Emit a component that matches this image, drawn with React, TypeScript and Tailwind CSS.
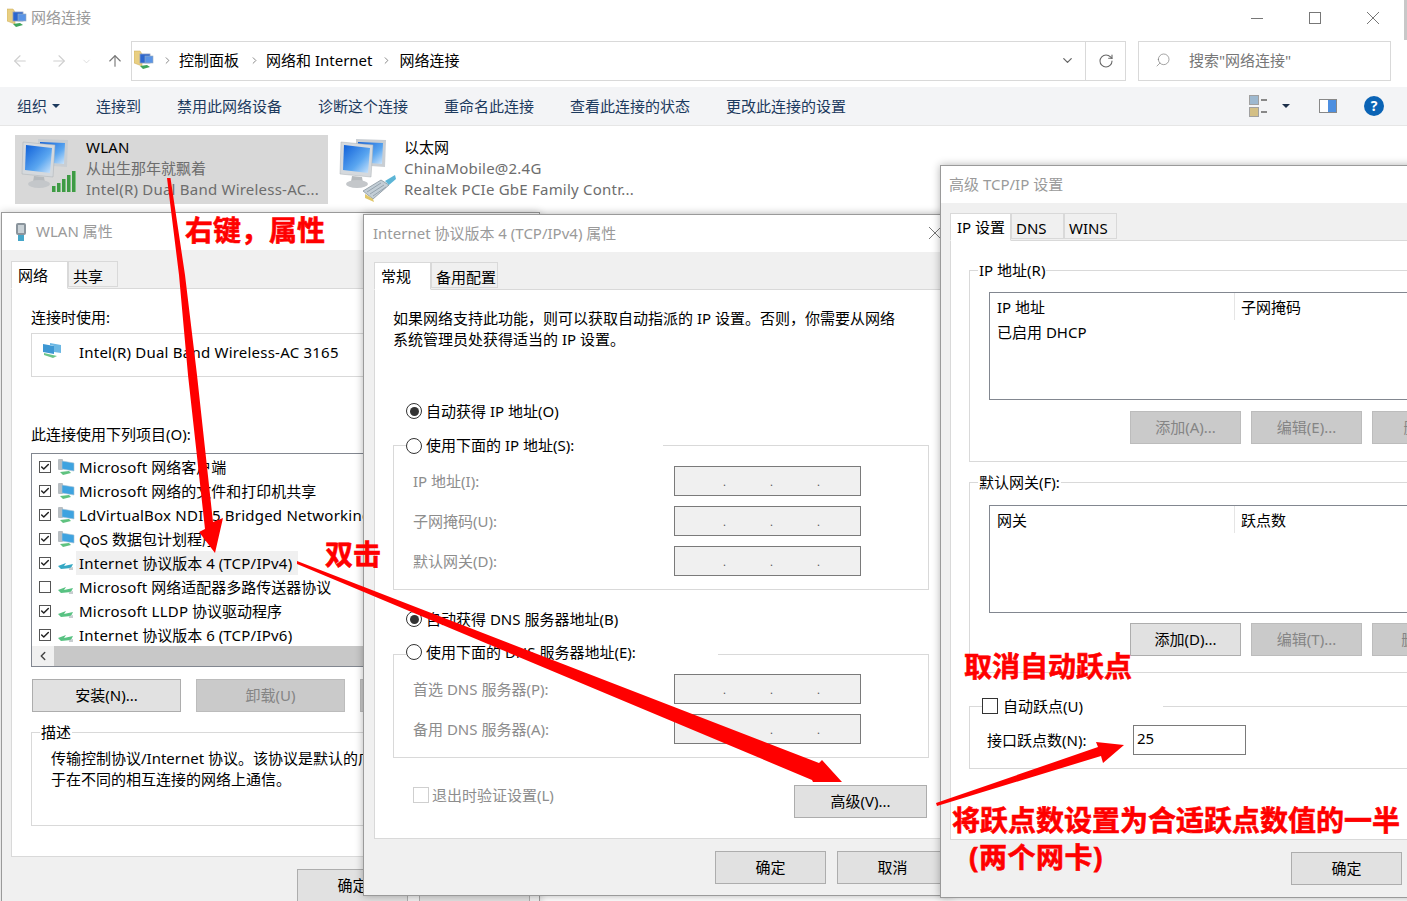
import { ReactNode } from 'react'
import { ArrowLeft, ArrowRight, ArrowUp, ChevronDown, ChevronLeft, ChevronRight, Check, RotateCw, Search } from 'lucide-react'

// small helpers for the classic dialog controls
function Btn({ w = 'w-[111px]', disabled, children }: { w?: string; disabled?: boolean; children?: ReactNode }) {
  return (
    <div className={`${w} h-[33px] shrink-0 flex items-center justify-center border ${disabled ? 'bg-[#cacaca] border-[#bcbcbc] text-[#858585]' : 'bg-[#e1e1e1] border-[#adadad] text-black'}`}>
      {children}
    </div>
  )
}

// latin runs in the explorer tiles and the item list sit a little wider than the font gives
function L({ children }: { children: ReactNode }) {
  return <span className="tracking-[0.22px]">{children}</span>
}

function Radio({ on }: { on?: boolean }) {
  return (
    <div className="w-4 h-4 shrink-0 rounded-full border border-[#333] bg-white flex items-center justify-center">
      {on && <div className="w-[9px] h-[9px] rounded-full bg-[#333]" />}
    </div>
  )
}

function Tab({ active, w, children }: { active?: boolean; w: string; children: ReactNode }) {
  return (
    <div className={`${w} border border-[#d9d9d9] -mb-px ${active ? 'h-[28px] bg-white border-b-white pl-[6px] pt-[2px] z-10' : 'h-[26px] pl-[4px] pt-[3px]'}`}>
      {children}
    </div>
  )
}

function IpBox() {
  return (
    <div className="w-[187px] h-[30px] border border-[#7a7a7a] bg-[#f0f0f0] flex items-center pl-[48px] gap-[44px] text-[#555] text-[11px] leading-none">
      <span>.</span><span>.</span><span>.</span>
    </div>
  )
}

function NetMonitors() {
  return (
    <svg width="56" height="62" viewBox="0 0 56 62">
      <defs>
        <linearGradient id="scr" x1="0" y1="0" x2="1" y2="1">
          <stop offset="0" stopColor="#0f5fd8" />
          <stop offset="0.6" stopColor="#5aa6f0" />
          <stop offset="1" stopColor="#cfe6fb" />
        </linearGradient>
      </defs>
      <path d="M18 2 L48 3 L47 30 L18 28 Z" fill="#c9ced3" />
      <path d="M20 5 L45 6 L44 27 L20 25 Z" fill="url(#scr)" />
      <path d="M3 5 L35 8 L33 40 L2 37 Z" fill="#d5d9dd" stroke="#aab0b5" strokeWidth="0.5" />
      <path d="M6 8 L32 11 L30 36 L5 33 Z" fill="url(#scr)" />
      <path d="M14 39 L24 40 L25 46 L13 45 Z" fill="#b6babd" />
      <ellipse cx="19" cy="47" rx="11" ry="4" fill="#c4c7ca" />
    </svg>
  )
}

function SignalBars() {
  return (
    <div className="flex items-end gap-px h-[21px]">
      {[6, 9, 13, 17, 21].map(h => (
        <div key={h} className="w-[4px] bg-[#3f9a45] border-r border-[#7fc585]" style={{ height: h }} />
      ))}
    </div>
  )
}

function CablePlug() {
  return (
    <svg width="36" height="32" viewBox="0 0 36 32">
      <path d="M2 20 L20 9 L28 14 L12 28 Z" fill="#c3ced6" stroke="#7d8a94" strokeWidth="0.7" />
      <path d="M6 21 L20 12 M9 23 L23 14 M12 25 L25 16" stroke="#8a98a3" strokeWidth="0.8" />
      <path d="M4 23 L12 28 L13 31 L4 27 Z" fill="#e0c76a" />
      <path d="M24 10 L34 4 L35 8 L28 14 Z" fill="#5cb5d6" />
    </svg>
  )
}

function FolderNet() {
  return (
    <svg width="20" height="20" viewBox="0 0 20 20" className="shrink-0">
      <path d="M0 1 L6 1 L8 4 L8 16 L0 13 Z" fill="#e9cf82" stroke="#c9a957" strokeWidth="0.5" />
      <rect x="6" y="4" width="10" height="9" fill="#2b66cf" stroke="#8a9cc0" strokeWidth="0.8" />
      <rect x="11" y="6" width="8" height="7" fill="#5a94e6" stroke="#9ab" strokeWidth="0.6" />
      <path d="M6 16 L13 15 L16 17 L9 19 Z" fill="#3fa55a" />
    </svg>
  )
}

function ListIcon({ plain, active }: { plain?: boolean; active?: boolean }) {
  if (plain) {
    return (
      <svg width="18" height="18" viewBox="0 0 18 18" className="shrink-0">
        <path d="M1 12 L9 9 L7 12 L16 10 L14 14 L4 15 Z" fill={active ? '#35a8c4' : '#58c282'} />
        <path d="M12 14 L16 13 L16 16 L12 16 Z" fill="#c8cdd0" />
      </svg>
    )
  }
  return (
    <svg width="18" height="18" viewBox="0 0 18 18" className="shrink-0">
      <rect x="1" y="1" width="5" height="11" rx="1" fill="#b8bec2" />
      <path d="M5 3 L17 5 L17 13 L5 11 Z" fill="#3ea3e0" stroke="#a9c3d3" strokeWidth="0.6" />
      <path d="M3 14 L12 13 L14 15 L6 17 Z" fill="#5fc27f" />
    </svg>
  )
}

function ItemRow({ on, plain, active, children }: { on?: boolean; plain?: boolean; active?: boolean; children: ReactNode }) {
  return (
    <div className="h-6 shrink-0 flex items-center pl-[7px]">
      <div className="w-[12px] h-[12px] shrink-0 border border-[#555] bg-white flex items-center justify-center">
        {on && <Check size={10} strokeWidth={3.5} className="text-[#222]" />}
      </div>
      <div className="ml-[6px]"><ListIcon plain={plain} active={active} /></div>
      <div className={`ml-[1px] h-6 flex items-center pl-[3px] pr-[6px] whitespace-pre ${active ? 'bg-[#f0f0f0]' : ''}`}>{children}</div>
    </div>
  )
}

function Legend({ children }: { children: ReactNode }) {
  return <legend className="ml-2 px-[1px] h-[22px] leading-[22px]">{children}</legend>
}

function Explorer() {
  return (
    <div className="flex flex-col">
      <div className="h-[35px] flex items-center pl-[7px]">
        <FolderNet />
        <span className="ml-[4px] text-[#9a9a9a]">网络连接</span>
        <div className="ml-auto flex items-center text-[#777] pr-[28px] gap-[46px]">
          <svg width="12" height="12" viewBox="0 0 12 12"><path d="M0 6.5 H12" stroke="currentColor" /></svg>
          <svg width="12" height="12" viewBox="0 0 12 12"><rect x="0.5" y="0.5" width="11" height="11" fill="none" stroke="currentColor" /></svg>
          <svg width="12" height="12" viewBox="0 0 12 12"><path d="M0 0 L12 12 M12 0 L0 12" stroke="currentColor" /></svg>
        </div>
      </div>
      <div className="h-[40px] mt-[6px] flex items-center">
        <ArrowLeft size={18} strokeWidth={1.5} className="ml-[11px] text-[#cfcfcf]" />
        <ArrowRight size={18} strokeWidth={1.5} className="ml-[21px] text-[#cfcfcf]" />
        <ChevronDown size={11} strokeWidth={1.5} className="ml-[13px] text-[#cfcfcf]" />
        <ArrowUp size={18} strokeWidth={1.5} className="ml-[14px] text-[#777]" />
        <div className="ml-[7px] w-[995px] h-[40px] border border-[#d9d9d9] flex items-center pb-[2px]">
          <div className="ml-[2px]"><FolderNet /></div>
          <ChevronRight size={11} strokeWidth={1.5} className="ml-[8px] text-[#555]" />
          <span className="ml-[6px]">控制面板</span>
          <ChevronRight size={11} strokeWidth={1.5} className="ml-[10px] text-[#555]" />
          <span className="ml-[6px]">网络和 Internet</span>
          <ChevronRight size={11} strokeWidth={1.5} className="ml-[8px] text-[#555]" />
          <span className="ml-[8px]">网络连接</span>
          <ChevronDown size={15} strokeWidth={2} className="ml-auto mr-[10px] text-[#666]" />
          <div className="w-[40px] h-[38px] -mb-[2px] border-l border-[#d9d9d9] flex items-center justify-center">
            <RotateCw size={16} strokeWidth={1.6} className="text-[#666]" />
          </div>
        </div>
        <div className="ml-[12px] w-[253px] h-[40px] border border-[#d9d9d9] flex items-center pl-[16px] pb-[2px] text-[#777]">
          <Search size={16} strokeWidth={1} className="-scale-x-100" />
          <span className="ml-[18px]">搜索"网络连接"</span>
        </div>
      </div>
      <div className="mt-[6px] h-[39px] bg-[#f3f4f6] border-b border-[#e6e6e6] flex items-center pl-[17px] gap-9 text-[#1c3a5e]">
        <div className="flex items-center gap-[5px]">
          <span>组织</span>
          <div className="w-0 h-0 border-x-[4px] border-x-transparent border-t-[4px] border-t-[#1c3a5e]" />
        </div>
        <span>连接到</span>
        <span>禁用此网络设备</span>
        <span>诊断这个连接</span>
        <span>重命名此连接</span>
        <span>查看此连接的状态</span>
        <span>更改此连接的设置</span>
        <div className="ml-auto flex items-center pr-[23px]">
          <div className="flex flex-col gap-[2px]">
            <div className="flex items-center gap-[2px]"><div className="w-[10px] h-[10px] border border-[#a0a0a0] bg-[#9db8cf]" /><div className="w-[6px] h-[2px] bg-[#888]" /></div>
            <div className="flex items-center gap-[2px]"><div className="w-[10px] h-[10px] border border-[#a0a0a0] bg-[#d3bf85]" /><div className="w-[6px] h-[2px] bg-[#888]" /></div>
          </div>
          <div className="ml-[15px] w-0 h-0 border-x-[4px] border-x-transparent border-t-[4px] border-t-[#1c2f4a]" />
          <div className="ml-[29px] w-[18px] h-[14px] border border-[#888] bg-white flex justify-end">
            <div className="w-[8px] h-full bg-[#4d8fe0]" />
          </div>
          <div className="ml-[27px] w-5 h-5 rounded-full bg-[#0a63b5] text-white font-bold text-[14px] leading-5 text-center">?</div>
        </div>
      </div>
      <div className="flex pl-[15px] pt-[9px]">
        <div className="w-[313px] h-[69px] bg-[#d8d8d8] flex pl-[5px] pt-[2px]">
          <div className="relative w-[66px] shrink-0">
            <NetMonitors />
            <div className="absolute left-[32px] top-[34px]"><SignalBars /></div>
          </div>
          <div className="leading-[21px] whitespace-nowrap">
            <div><L>WLAN</L></div>
            <div className="text-[#6d6d6d]">从出生那年就飘着</div>
            <div className="text-[#6d6d6d]"><L>Intel(R) Dual Band Wireless-AC...</L></div>
          </div>
        </div>
        <div className="ml-[10px] flex pt-[2px]">
          <div className="relative w-[66px] shrink-0">
            <NetMonitors />
            <div className="absolute left-[23px] top-[34px]"><CablePlug /></div>
          </div>
          <div className="leading-[21px] whitespace-nowrap">
            <div>以太网</div>
            <div className="text-[#6d6d6d]"><L>ChinaMobile@2.4G</L></div>
            <div className="text-[#6d6d6d]"><L>Realtek PCIe GbE Family Contr...</L></div>
          </div>
        </div>
      </div>
    </div>
  )
}

function WlanDialog() {
  return (
    <div className="absolute left-px top-[212px] w-[539px] h-[720px] bg-[#f0f0f0] border border-[#9a9a9a] shadow-[0_0_8px_rgba(0,0,0,0.2)] flex flex-col">
      <div className="h-[37px] bg-white flex items-center pl-[12px] shrink-0">
        <svg width="14" height="20" viewBox="0 0 14 20"><rect x="2" y="1" width="10" height="12" rx="2" fill="#8a949c" /><rect x="4" y="3" width="6" height="8" fill="#c9d1d6" /><rect x="4" y="13" width="6" height="6" fill="#45a6c9" /></svg>
        <span className="ml-[8px] text-[#9a9a9a]">WLAN 属性</span>
      </div>
      <div className="flex pl-[9px] pt-[11px] shrink-0">
        <Tab active w="w-[57px]">网络</Tab>
        <Tab w="w-[50px]">共享</Tab>
      </div>
      <div className="ml-[9px] w-[600px] h-[569px] bg-white border border-[#d9d9d9] shrink-0 pl-[19px] flex flex-col">
        <div className="mt-[17px] h-[22px] leading-[22px]">连接时使用:</div>
        <div className="mt-[5px] h-[44px] border border-[#d9d9d9] flex items-start pl-[10px] pt-[7px]">
          <svg width="20" height="16" viewBox="0 0 20 16" className="mt-[1px]"><path d="M1 2 L12 4 L12 12 L1 10 Z" fill="#3d97d3" /><path d="M8 1 L19 3 L19 11 L12 10 L12 4 L8 3 Z" fill="#6cb8e4" /><path d="M2 11 L15 14 L11 16 L2 13 Z" fill="#6cc489" /></svg>
          <span className="ml-[17px]"><L>Intel(R) Dual Band Wireless-AC 3165</L></span>
        </div>
        <div className="mt-[46px] h-[22px] leading-[22px]">此连接使用下列项目(O):</div>
        <div className="mt-[8px] h-[214px] border border-[#828790] flex flex-col">
          <div className="h-[192px] pt-px overflow-hidden flex flex-col shrink-0">
            <ItemRow on><L>Microsoft</L> 网络客户端</ItemRow>
            <ItemRow on><L>Microsoft</L> 网络的文件和打印机共享</ItemRow>
            <ItemRow on><L>LdVirtualBox NDIS5 Bridged Networking</L></ItemRow>
            <ItemRow on>QoS 数据包计划程序</ItemRow>
            <ItemRow on plain active><L>Internet</L> 协议版本 4 <L>(TCP/IPv4)</L></ItemRow>
            <ItemRow plain><L>Microsoft</L> 网络适配器多路传送器协议</ItemRow>
            <ItemRow on plain><L>Microsoft LLDP</L> 协议驱动程序</ItemRow>
            <ItemRow on plain><L>Internet</L> 协议版本 6 <L>(TCP/IPv6)</L></ItemRow>
          </div>
          <div className="flex h-5">
            <div className="w-[22px] bg-[#f0f0f0] flex items-center justify-center text-[#444]"><ChevronLeft size={14} strokeWidth={2.5} /></div>
            <div className="flex-1 bg-[#c8c8c8]" />
          </div>
        </div>
        <div className="mt-[12px] pl-px flex gap-[15px]">
          <Btn w="w-[149px]">安装(N)...</Btn>
          <Btn w="w-[149px]" disabled>卸载(U)</Btn>
          <Btn w="w-[149px]" disabled />
        </div>
        <fieldset className="mt-[9px] h-[105px] border border-[#d9d9d9]">
          <Legend>描述</Legend>
          <div className="mt-[5px] pl-[19px] leading-[21px] whitespace-nowrap">
            传输控制协议/Internet 协议。该协议是默认的广域网络协议，用<br />于在不同的相互连接的网络上通信。
          </div>
        </fieldset>
      </div>
      <div className="mt-[12px] ml-[295px] flex gap-[11px]">
        <Btn>确定</Btn>
        <Btn />
      </div>
    </div>
  )
}

function Ipv4Dialog() {
  return (
    <div className="absolute left-[363px] top-[214px] w-[590px] h-[682px] bg-[#f0f0f0] border border-[#9a9a9a] shadow-[0_0_8px_rgba(0,0,0,0.3)] flex flex-col">
      <div className="h-[37px] bg-white flex items-center pl-[9px] shrink-0 relative">
        <span className="text-[#9a9a9a]">Internet 协议版本 4 (TCP/IPv4) 属性</span>
        <svg width="12" height="12" viewBox="0 0 12 12" className="absolute left-[565px] top-[12px] text-[#777]"><path d="M0 0 L12 12 M12 0 L0 12" stroke="currentColor" /></svg>
      </div>
      <div className="flex pl-[10px] pt-[10px] shrink-0">
        <Tab active w="w-[57px]">常规</Tab>
        <Tab w="w-[67px]">备用配置</Tab>
      </div>
      <div className="ml-[10px] w-[578px] h-[550px] bg-white border border-[#d9d9d9] shrink-0 pl-[18px] flex flex-col">
        <div className="mt-[18px] leading-[21px] whitespace-nowrap">
          如果网络支持此功能，则可以获取自动指派的 IP 设置。否则，你需要从网络<br />系统管理员处获得适当的 IP 设置。
        </div>
        <div className="mt-[50px] h-[22px] ml-[13px] flex items-center gap-[4px]"><Radio on /><span>自动获得 IP 地址(O)</span></div>
        <fieldset className="mt-[12px] w-[536px] h-[156px] border border-[#d9d9d9]">
          <legend className="ml-3 w-[257px] h-[23px] flex items-center gap-[4px]"><Radio /><span>使用下面的 IP 地址(S):</span></legend>
          <div className="mt-[9px] pl-[19px] flex flex-col gap-[10px] text-[#8d8d8d]">
            <div className="flex items-center justify-between w-[448px]"><span>IP 地址(I):</span><IpBox /></div>
            <div className="flex items-center justify-between w-[448px]"><span>子网掩码(U):</span><IpBox /></div>
            <div className="flex items-center justify-between w-[448px]"><span>默认网关(D):</span><IpBox /></div>
          </div>
        </fieldset>
        <div className="mt-[18px] h-[22px] ml-[13px] flex items-center gap-[4px]"><Radio on /><span>自动获得 DNS 服务器地址(B)</span></div>
        <fieldset className="mt-[10px] w-[536px] h-[118px] border border-[#d9d9d9]">
          <legend className="ml-3 w-[312px] h-[28px] flex items-start pt-[4px] gap-[4px]"><Radio /><span className="-mt-[3px]">使用下面的 DNS 服务器地址(E):</span></legend>
          <div className="mt-[6px] pl-[19px] flex flex-col gap-[10px] text-[#8d8d8d]">
            <div className="flex items-center justify-between w-[448px]"><span>首选 DNS 服务器(P):</span><IpBox /></div>
            <div className="flex items-center justify-between w-[448px]"><span>备用 DNS 服务器(A):</span><IpBox /></div>
          </div>
        </fieldset>
        <div className="mt-[27px] h-[33px] w-[534px] flex items-start">
          <div className="ml-[20px] mt-[2px] w-4 h-4 border border-[#cfcfcf]" />
          <span className="ml-[3px] -mt-[1px] text-[#8d8d8d]">退出时验证设置(L)</span>
          <div className="ml-auto"><Btn w="w-[133px]">高级(V)...</Btn></div>
        </div>
      </div>
      <div className="mt-[12px] ml-[351px] flex gap-[11px]">
        <Btn>确定</Btn>
        <Btn>取消</Btn>
      </div>
    </div>
  )
}

function GatewayList({ head1, head2, row }: { head1: string; head2: string; row?: string }) {
  return (
    <div className="ml-[19px] w-[560px] h-[108px] border border-[#828790] bg-white">
      <div className="flex h-[27px]">
        <div className="w-[245px] pl-[7px] pt-[3px] border-r border-[#e5e5e5]">{head1}</div>
        <div className="pl-[6px] pt-[3px]">{head2}</div>
      </div>
      {row && <div className="pl-[7px] mt-px">{row}</div>}
    </div>
  )
}

function AdvancedDialog() {
  return (
    <div className="absolute left-[940px] top-[165px] w-[600px] h-[733px] bg-[#f0f0f0] border border-[#9a9a9a] shadow-[0_0_8px_rgba(0,0,0,0.3)] flex flex-col">
      <div className="h-[37px] bg-white flex items-center pl-[8px] shrink-0">
        <span className="text-[#9a9a9a]">高级 TCP/IP 设置</span>
      </div>
      <div className="flex pl-[9px] pt-[10px] shrink-0">
        <Tab active w="w-[61px]">IP 设置</Tab>
        <Tab w="w-[53px]">DNS</Tab>
        <Tab w="w-[53px]">WINS</Tab>
      </div>
      <div className="ml-[9px] w-[580px] h-[600px] bg-white border border-[#d9d9d9] shrink-0 pl-[18px] flex flex-col">
        <fieldset className="mt-[18px] w-[560px] h-[203px] border border-[#d9d9d9]">
          <Legend>IP 地址(R)</Legend>
          <div className="mt-[11px]"><GatewayList head1="IP 地址" head2="子网掩码" row="已启用 DHCP" /></div>
          <div className="mt-[11px] ml-[160px] flex gap-[10px]">
            <Btn disabled>添加(A)...</Btn>
            <Btn disabled>编辑(E)...</Btn>
            <Btn disabled>删除(V)</Btn>
          </div>
        </fieldset>
        <fieldset className="mt-[9px] w-[560px] h-[202px] border border-[#d9d9d9]">
          <Legend>默认网关(F):</Legend>
          <div className="mt-[12px]"><GatewayList head1="网关" head2="跃点数" /></div>
          <div className="mt-[10px] ml-[160px] flex gap-[10px]">
            <Btn>添加(D)...</Btn>
            <Btn disabled>编辑(T)...</Btn>
            <Btn disabled>删除(M)</Btn>
          </div>
        </fieldset>
        <fieldset className="mt-[22px] w-[560px] h-[74px] border border-[#d9d9d9]">
          <legend className="ml-3 w-[181px] h-[22px] flex items-center gap-[5px]">
            <div className="w-4 h-4 border border-[#333] bg-white" />
            <span>自动跃点(U)</span>
          </legend>
          <div className="mt-[8px] flex items-center pl-[17px]">
            <span className="w-[146px]">接口跃点数(N):</span>
            <div className="w-[113px] h-[30px] border border-[#7a7a7a] pl-[3px] leading-[25px]">25</div>
          </div>
        </fieldset>
      </div>
      <div className="mt-[12px] ml-[350px]"><Btn>确定</Btn></div>
    </div>
  )
}

export default function App() {
  return (
    <div className="relative w-[1407px] h-[901px] overflow-hidden bg-white text-black text-[15px] font-['Noto_Sans','Noto_Sans_CJK_SC',sans-serif]">
      <Explorer />
      <div className="absolute right-0 top-0 w-[3px] h-[40px] bg-[#c8c8c8]" />
      <WlanDialog />
      <Ipv4Dialog />
      <AdvancedDialog />

      {/* red annotations painted on top of the screenshot */}
      <svg width="1407" height="901" className="absolute left-0 top-0 pointer-events-none">
        <polygon fill="#ff0000" points="167,178 170.5,178 185,275 197,375 213,522 223,518 215,553 199,532 205,529 188,375 179,275" />
        <polygon fill="#ff0000" points="297,561 819,763 822,760 842,782 813,782 812,780 297,564" />
        <polygon fill="#ff0000" points="936,803 1098,747 1096,742 1124,745 1103,763 1101,756 937,806" />
      </svg>
      <div className="absolute left-[185px] top-[210px] text-[28px] leading-[40px] font-bold text-[#ff0000] whitespace-nowrap [-webkit-text-stroke:0.6px_#ff0000]">右键，属性</div>
      <div className="absolute left-[325px] top-[534px] text-[28px] leading-[40px] font-bold text-[#ff0000] whitespace-nowrap [-webkit-text-stroke:0.6px_#ff0000]">双击</div>
      <div className="absolute left-[964px] top-[646px] text-[28px] leading-[40px] font-bold text-[#ff0000] whitespace-nowrap [-webkit-text-stroke:0.6px_#ff0000]">取消自动跃点</div>
      <div className="absolute left-[952px] top-[800px] text-[28px] leading-[40px] font-bold text-[#ff0000] whitespace-nowrap [-webkit-text-stroke:0.6px_#ff0000]">将跃点数设置为合适跃点数值的一半</div>
      <div className="absolute left-[969px] top-[837px] text-[28px] leading-[40px] font-bold text-[#ff0000] whitespace-nowrap tracking-[0.5px] [-webkit-text-stroke:0.6px_#ff0000]">(两个网卡)</div>
    </div>
  )
}
